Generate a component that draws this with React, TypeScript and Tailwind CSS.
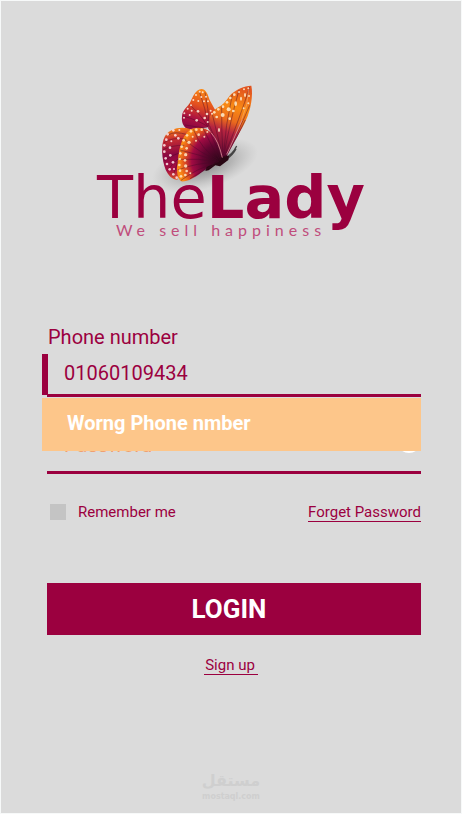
import React, { useState } from 'react';
import { Eye } from 'lucide-react';

const Butterfly = () => {
  return (
    <svg viewBox="0 0 330 330" className="w-[110px] h-[110px] mr-[52px] -mb-[14px] overflow-visible" aria-hidden="true">
      <defs>
        <linearGradient id="topLeft" x1="0.6" y1="0" x2="0.35" y2="1">
          <stop offset="0" stopColor="#fb8a14" />
          <stop offset="0.4" stopColor="#e2501f" />
          <stop offset="0.72" stopColor="#ae1440" />
          <stop offset="1" stopColor="#8c0642" />
        </linearGradient>
        <linearGradient id="topRight" x1="0.6" y1="0" x2="0.4" y2="1">
          <stop offset="0" stopColor="#e2551f" />
          <stop offset="0.28" stopColor="#f98a14" />
          <stop offset="0.48" stopColor="#ea6a1d" />
          <stop offset="0.64" stopColor="#b52440" />
          <stop offset="1" stopColor="#5c0430" />
        </linearGradient>
        <linearGradient id="lowLeft" x1="0.4" y1="0" x2="0.5" y2="1">
          <stop offset="0" stopColor="#f98a14" />
          <stop offset="0.2" stopColor="#c92f30" />
          <stop offset="0.5" stopColor="#8b0742" />
          <stop offset="0.8" stopColor="#a80f42" />
          <stop offset="1" stopColor="#e45b20" />
        </linearGradient>
        <radialGradient id="lowRight" gradientUnits="userSpaceOnUse" cx="205" cy="248" r="138">
          <stop offset="0" stopColor="#2c0618" />
          <stop offset="0.35" stopColor="#650532" />
          <stop offset="0.58" stopColor="#a10b43" />
          <stop offset="0.74" stopColor="#e0511f" />
          <stop offset="0.86" stopColor="#fa8915" />
        </radialGradient>
        <radialGradient id="shade">
          <stop offset="0" stopColor="#555" stopOpacity="0.65" />
          <stop offset="0.5" stopColor="#777" stopOpacity="0.4" />
          <stop offset="1" stopColor="#999" stopOpacity="0" />
        </radialGradient>
      </defs>
      <ellipse cx="165" cy="262" rx="165" ry="70" fill="url(#shade)" transform="rotate(-17 165 262)" />
      <path d="M224 240Q246 232 260 204M226 246Q250 230 258 212" fill="none" stroke="#444" strokeWidth="4" />

      <path d="M96 115C97 94 113 88 121 72C128 57 137 34 154 33C169 33 174 51 179 66L196 97L182 114L176 148L150 151L112 154C99 144 94 133 96 115Z" fill="url(#topLeft)" />
      <path d="M178 130C178 110 190 95 211 84C224 77 230 63 244 48C259 35 286 22 304 23C310 52 302 96 288 126C274 157 252 192 227 241L215 242L198 185L174 151Z" fill="url(#topRight)" />
      <path d="M120 153C93 144 58 151 44 176C32 198 35 246 47 275C55 292 67 305 82 305L112 252L140 190Z" fill="url(#lowLeft)" />
      <path d="M84 245C87 211 96 178 115 159C134 144 166 146 185 165C201 180 208 216 216 242L175 268C151 286 121 313 93 310C79 295 79 270 84 245Z" fill="url(#lowRight)" />

      <path d="M212 239Q225 230 237 234L235 246L222 256L210 265L196 262L176 277L166 279L170 267L190 257Z" fill="#290713" />

      <g fill="none" stroke="#4c092b" strokeWidth="2" opacity="0.65">
        <path d="M175 147Q145 126 98 114M175 147Q145 101 118 80M176 145Q166 90 148 40M177 140Q176 93 165 43M170 150Q139 147 105 141" />
        <path d="M218 239Q202 168 187 109M219 237Q214 153 215 84M220 236Q226 141 247 49M221 235Q242 123 267 36M222 236Q270 119 299 27M224 236Q271 150 299 82M225 238Q265 171 286 126M217 238Q198 185 178 142" />
        <path d="M112 170Q73 158 55 171M109 184Q67 176 42 194M103 202Q67 201 39 215M97 221Q67 231 43 248M91 237Q73 250 52 277M84 250Q74 277 69 296" />
        <path d="M209 248Q156 219 130 154M210 247Q185 206 159 150M213 246Q199 201 181 165M207 250Q147 223 103 184M206 251Q145 229 90 216M205 252Q147 240 84 244M202 254Q143 253 83 276M196 256Q143 270 93 307M191 261Q151 283 120 302" />
      </g>
      <path d="M184 165Q206 190 217 239M276 126Q249 189 230 229" fill="none" stroke="#e99aa0" strokeWidth="3" opacity="0.75" />
      <path d="M296 34Q294 82 275 125" fill="none" stroke="#f8c08c" strokeWidth="2" opacity="0.7" />

      <g fill="#fff0df" opacity="0.85">
        <circle cx="149" cy="41" r="3" /><circle cx="158" cy="43" r="3" /><circle cx="138" cy="51" r="3" />
        <circle cx="154" cy="57" r="3" /><circle cx="168" cy="56" r="3" /><circle cx="130" cy="66" r="3" />
        <circle cx="145" cy="69" r="3" /><circle cx="162" cy="70" r="3" /><circle cx="174" cy="70" r="3" />
        <circle cx="123" cy="82" r="3" /><circle cx="113" cy="92" r="3" /><circle cx="125" cy="98" r="3" />
        <circle cx="103" cy="106" r="3" /><circle cx="102" cy="119" r="3" /><circle cx="119" cy="111" r="3" />
        <circle cx="144" cy="100" r="4" /><circle cx="164" cy="120" r="4" /><circle cx="140" cy="127" r="4" />
        <circle cx="182" cy="98" r="3" /><circle cx="171" cy="108" r="4" /><circle cx="173" cy="132" r="3" />
        <circle cx="186" cy="107" r="3" />
      </g>
      <g fill="#fff0d0" opacity="0.85">
        <circle cx="193" cy="103" r="4" /><circle cx="205" cy="94" r="4" /><circle cx="219" cy="86" r="4" />
        <circle cx="231" cy="73" r="4" /><circle cx="241" cy="60" r="4" /><circle cx="253" cy="50" r="4" />
        <circle cx="267" cy="42" r="3" /><circle cx="282" cy="34" r="3" /><circle cx="295" cy="31" r="3" />
        <circle cx="200" cy="117" r="4" /><circle cx="218" cy="111" r="6" /><circle cx="236" cy="94" r="6" />
        <ellipse cx="257" cy="77" rx="4" ry="7" /><ellipse cx="273" cy="62" rx="3" ry="6" />
        <ellipse cx="285" cy="51" rx="3" ry="6" /><circle cx="297" cy="54" r="3" /><circle cx="295" cy="76" r="3" />
        <circle cx="281" cy="91" r="3" /><circle cx="250" cy="99" r="4" /><circle cx="239" cy="122" r="4" />
        <ellipse cx="207" cy="156" rx="3" ry="6" />
      </g>
      <g fill="#ffe6e8" opacity="0.85">
        <circle cx="70" cy="157" r="4" /><circle cx="88" cy="156" r="3" /><circle cx="53" cy="169" r="4" />
        <circle cx="76" cy="172" r="4" /><circle cx="49" cy="185" r="4" /><circle cx="64" cy="190" r="3" />
        <circle cx="85" cy="181" r="4" /><circle cx="43" cy="202" r="4" /><circle cx="60" cy="209" r="4" />
        <circle cx="43" cy="221" r="4" /><circle cx="61" cy="232" r="4" /><circle cx="47" cy="241" r="4" />
        <circle cx="51" cy="258" r="4" /><circle cx="69" cy="253" r="4" /><circle cx="59" cy="274" r="4" />
        <circle cx="72" cy="273" r="3" /><circle cx="70" cy="289" r="4" /><circle cx="80" cy="299" r="4" />
      </g>
      <g fill="#ffe9c4" opacity="0.85">
        <circle cx="123" cy="160" r="4" /><circle cx="139" cy="155" r="4" /><circle cx="155" cy="155" r="4" />
        <circle cx="172" cy="162" r="3" /><circle cx="111" cy="172" r="4" /><circle cx="128" cy="176" r="3" />
        <circle cx="146" cy="170" r="4" /><circle cx="163" cy="176" r="3" /><circle cx="101" cy="187" r="4" />
        <circle cx="117" cy="193" r="5" /><circle cx="138" cy="188" r="3" /><circle cx="95" cy="206" r="4" />
        <circle cx="110" cy="211" r="4" /><circle cx="91" cy="226" r="4" /><circle cx="107" cy="230" r="5" />
        <circle cx="89" cy="243" r="4" /><circle cx="105" cy="247" r="4" /><circle cx="88" cy="261" r="4" />
        <circle cx="107" cy="264" r="5" /><circle cx="90" cy="278" r="4" /><circle cx="110" cy="279" r="4" />
        <circle cx="93" cy="295" r="4" /><circle cx="106" cy="291" r="4" /><circle cx="121" cy="286" r="3" />
      </g>
    </svg>
  );
};

const Logo = () => {
  return (
    <div className="flex flex-col items-center">
      <Butterfly />
      <h1 className="relative font-['DejaVu_Sans',sans-serif] text-[59px] leading-[48px] whitespace-nowrap">
        The<span className="font-bold">Lady</span>
      </h1>
      <p className="font-[Lato,sans-serif] text-base leading-4 tracking-[5px] mr-5 text-[#c04d7c] whitespace-nowrap">
        We sell happiness
      </p>
    </div>
  );
};

const App = () => {
  const [phone, setPhone] = useState('01060109434');
  const [showPassword, setShowPassword] = useState(false);

  return (
    <main className="min-h-screen flex flex-col border border-[#f7f9f9] bg-[#dbdbdb] text-[#9b003f] font-[Roboto,sans-serif] pt-[77px] pb-3 pl-[46px] pr-10">
      <div className="-ml-[6px]">
        <Logo />
      </div>

      <form className="mt-[87px]" onSubmit={(e) => e.preventDefault()}>
        <label htmlFor="phone" className="block pl-px text-xl leading-6 mb-[5px]">
          Phone number
        </label>
        <div className="relative">
          <span className="absolute -left-[5px] top-0 w-[6px] h-[41px] bg-[#9b003f]" />
          <input
            id="phone"
            type="tel"
            value={phone}
            onChange={(e) => setPhone(e.target.value)}
            className="block w-full h-[43px] pl-[17px] pb-[2px] text-xl leading-6 bg-transparent border-b-3 border-[#9b003f] focus:outline-none"
          />
          <p
            role="alert"
            className="absolute z-10 top-[44px] -left-[5px] right-0 h-[53px] pl-[25px] pb-1 flex items-center bg-[#fdc68a] text-white text-xl font-bold"
          >
            Worng Phone nmber
          </p>
        </div>

        <div className="relative mt-[18px]">
          <input
            type={showPassword ? 'text' : 'password'}
            placeholder="Password"
            aria-label="Password"
            className="block w-full h-[59px] pl-[17px] pt-1 text-xl leading-6 bg-transparent border-b-3 border-[#9b003f] placeholder:text-[#f0a070] focus:outline-none"
          />
          <button
            type="button"
            aria-label="Show password"
            onClick={() => setShowPassword(!showPassword)}
            className="absolute right-0 top-[18px] text-white"
          >
            <Eye size={24} />
          </button>
        </div>

        <div className="mt-7 flex items-center justify-between text-[15px] leading-5">
          <label className="flex items-center gap-3 pl-[3px]">
            <input type="checkbox" className="appearance-none w-4 h-4 bg-[#c4c4c4] checked:bg-[#9b003f]" />
            Remember me
          </label>
          <a href="#forget" className="block h-5 border-b border-[#9b003f]">
            Forget Password
          </a>
        </div>

        <button type="submit" className="block w-full h-[52px] mt-[61px] pr-[10px] bg-[#9b003f] text-white text-[26px] font-bold">
          LOGIN
        </button>
      </form>

      <a href="#signup" className="block h-5 mt-5 -ml-[6px] pl-px pr-[3px] self-center border-b border-[#9b003f] text-[15px] leading-5">
        Sign up
      </a>

      <footer className="mt-auto -ml-[6px] pt-6 flex flex-col items-center text-[#cfcfcf] font-bold">
        <span lang="ar" dir="rtl" className="font-['DejaVu_Sans',sans-serif] text-base leading-6">
          مستقل
        </span>
        <span className="font-['DejaVu_Sans',sans-serif] text-[8px] leading-2">mostaql.com</span>
      </footer>
    </main>
  );
};

export default App;
